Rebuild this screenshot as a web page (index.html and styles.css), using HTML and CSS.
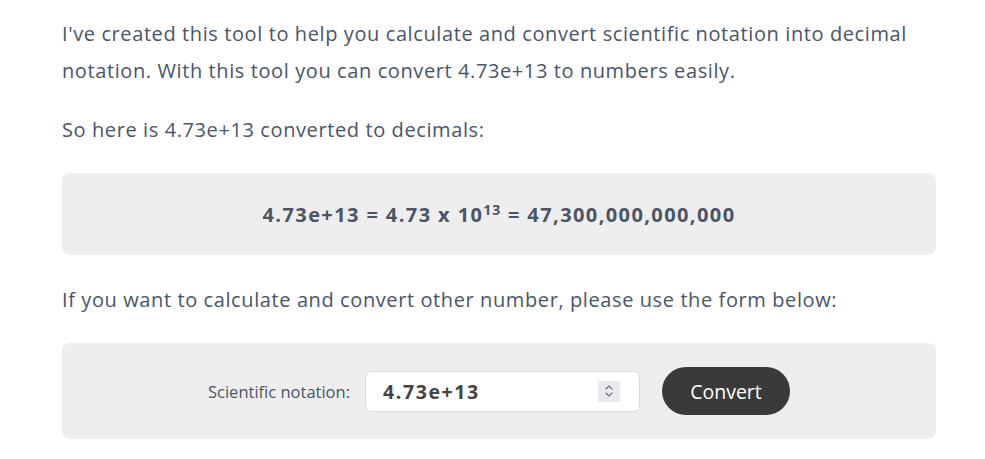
FILE: index.html
```html
<!DOCTYPE html>
<html>
<head>
<meta charset="utf-8">
<link rel="stylesheet" href="styles.css">
</head>
<body>
<main class="content">
  <p class="para">I've created this tool to help you calculate and convert scientific notation into decimal notation. With this tool you can convert 4.73e+13 to numbers easily.</p>
  <p class="para">So here is 4.73e+13 converted to decimals:</p>
  <div class="result"><span>4.73e+13 = 4.73 x 10<sup>13</sup> = 47,300,000,000,000</span></div>
  <p class="para">If you want to calculate and convert other number, please use the form below:</p>
  <form class="form-box">
    <label class="label">Scientific notation:</label>
    <div class="input">
      <span class="value">4.73e+13</span>
      <span class="spin"><svg width="10" height="14" viewBox="0 0 10 14"><path d="M2 5 L5 2 L8 5 M2 9 L5 12 L8 9" fill="none" stroke="#777" stroke-width="1.2" stroke-linecap="round" stroke-linejoin="round"/></svg></span>
    </div>
    <button type="button" class="btn">Convert</button>
  </form>
</main>
</body>
</html>
```
FILE: styles.css
```css
html, body { margin: 0; padding: 0; background: #fff; }
.content {
  width: 874px;
  margin-left: 62px;
  padding-top: 15px;
  font-family: "Open Sans", sans-serif;
  color: #4a5568;
  font-size: 20px;
  letter-spacing: 0.6px;
  line-height: 37px;
}
.para { margin: 0 0 22px 0; }
.result {
  background: #eeeeee;
  border-radius: 8px;
  height: 82px;
  display: flex;
  align-items: center;
  justify-content: center;
  font-weight: 700;
  letter-spacing: 1.4px;
  margin: 25px 0 26px 0;
}
.result sup { font-size: 14px; line-height: 0; vertical-align: 7px; letter-spacing: 1px; }
.form-box {
  background: #eeeeee;
  border-radius: 8px;
  height: 96px;
  display: flex;
  align-items: center;
  justify-content: center;
  margin-top: 25px;
  letter-spacing: 0;
}
.label {
  font-family: "Open Sans", sans-serif;
  font-size: 16.5px;
  color: #4a5568;
  margin-right: 15px;
}
.input {
  width: 275px;
  height: 41px;
  box-sizing: border-box;
  background: #fff;
  border: 1px solid #dcdcdc;
  border-radius: 6px;
  display: flex;
  align-items: center;
  padding: 0 19px 0 17px;
  margin-right: 22px;
}
.value {
  flex: 1;
  font-family: "Open Sans", sans-serif;
  font-weight: 700;
  font-size: 19.5px;
  letter-spacing: 1.6px;
  color: #444;
}
.spin {
  width: 22px;
  height: 21px;
  background: #e9e9ef;
  display: flex;
  align-items: center;
  justify-content: center;
}
.btn {
  width: 128px;
  height: 48px;
  border: none;
  border-radius: 24px;
  background: #3a3a3a;
  color: #fff;
  font-family: "Open Sans", sans-serif;
  font-size: 19.5px;
  padding: 0;
}
```
